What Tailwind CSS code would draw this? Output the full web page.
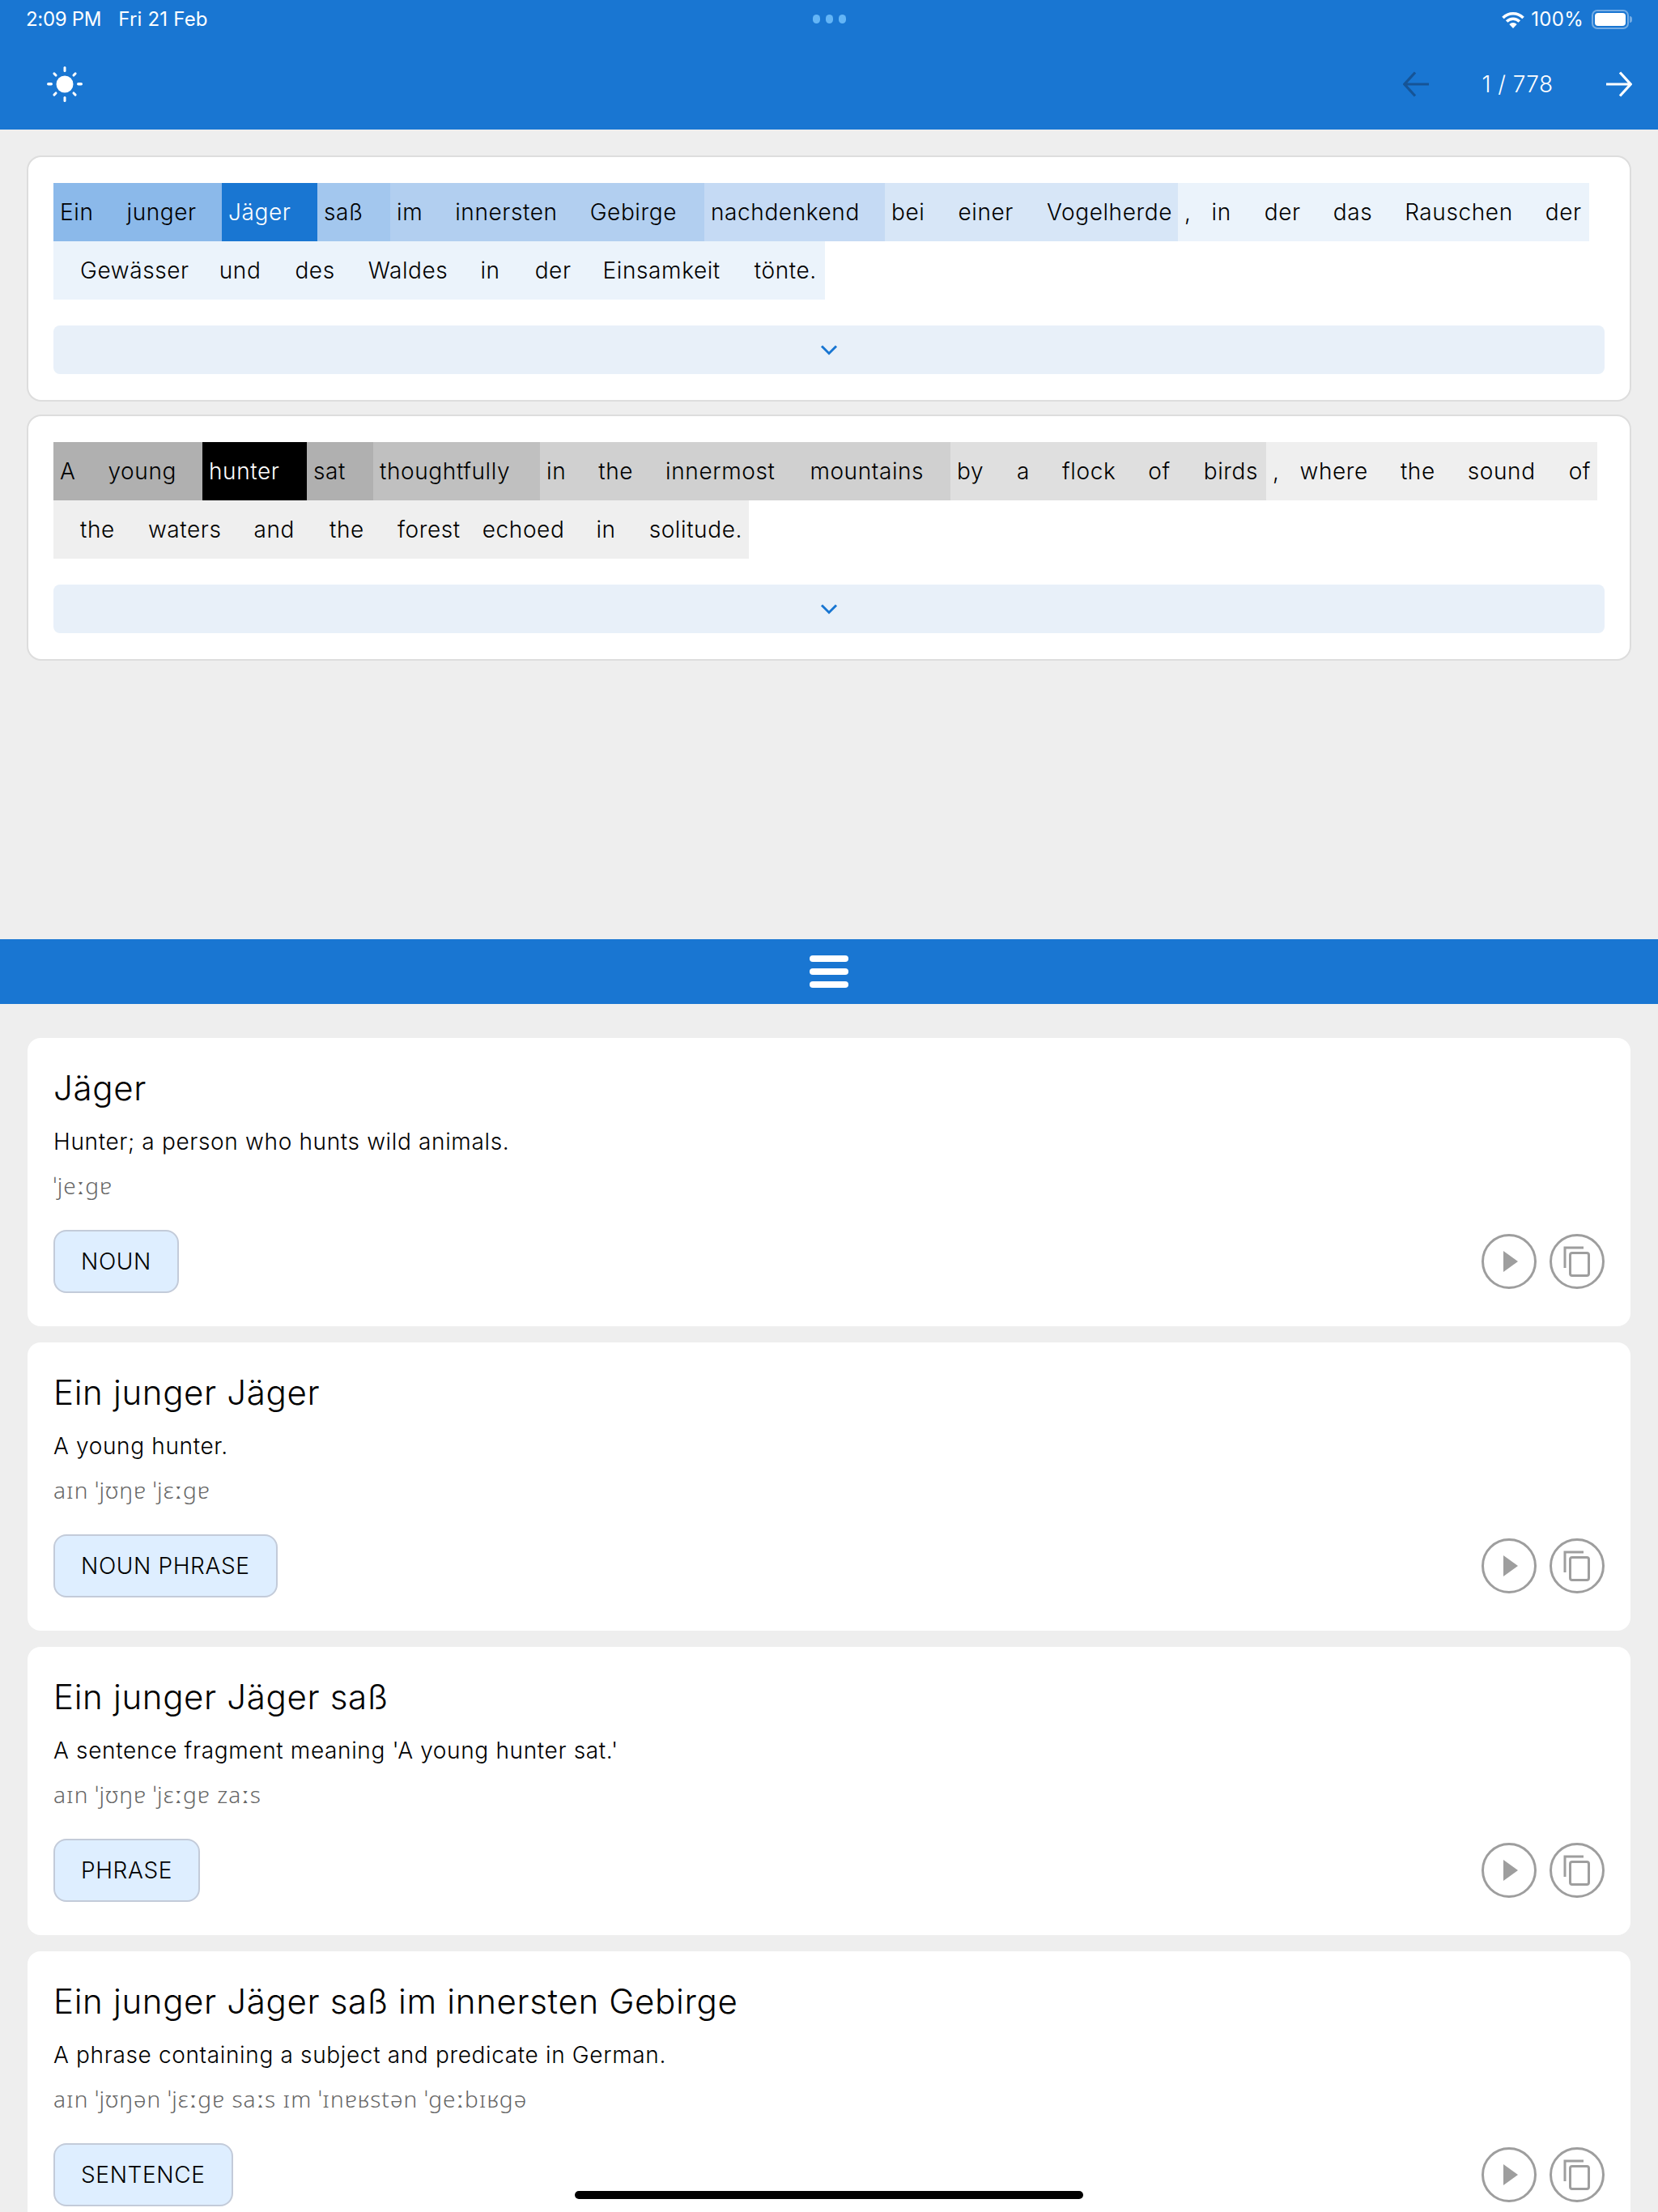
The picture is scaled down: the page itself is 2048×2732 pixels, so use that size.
<!DOCTYPE html>
<html lang="en">
<head>
    <meta charset="UTF-8">
    <meta name="viewport" content="width=device-width, initial-scale=1.0">
    <title>Reader</title>
    <script src="https://cdn.jsdelivr.net/npm/@tailwindcss/browser@4"></script>
</head>
<body class="bg-[#eeeeee] font-['Inter','Liberation_Sans',sans-serif] font-[350] text-black">
<div class="relative w-[2048px] h-[2732px] overflow-hidden">

    <!-- Status bar + toolbar -->
    <header class="bg-[#1976d2] h-[160px] text-white relative">
        <div class="h-[48px] px-[32px] flex items-center justify-between text-[24px] font-normal">
            <div class="flex gap-[21px]"><span class="tracking-[-0.3px]">2:09 PM</span><span class="tracking-[0.2px]">Fri 21 Feb</span></div>
            <div class="flex items-center gap-[7px]">
                <svg width="30" height="23" viewBox="0 0 28 22" fill="none" stroke="white" stroke-width="3.4"><path d="M2 8.500a17 17 0 0 1 24 0"/><path d="M6.500 13a10.500 10.500 0 0 1 15 0"/><path d="M14 21l-4.500-4.800a6.300 6.300 0 0 1 9 0z" fill="white" stroke="none"/></svg>
                <span class="tracking-[0.3px]">100%</span>
                <div class="flex items-center gap-[1px] ml-[3px]">
                    <div class="w-[46px] h-[24px] rounded-[7px] border-2 border-white/40 p-[2px]"><div class="w-full h-full bg-white rounded-[4px]"></div></div>
                    <div class="w-[3px] h-[8px] bg-white/40 rounded-r-full"></div>
                </div>
            </div>
        </div>
        <div class="absolute top-[18px] left-[1004px] flex gap-[7px]">
            <div class="w-[9px] h-[11px] rounded-full bg-[#64b5f6]"></div>
            <div class="w-[9px] h-[11px] rounded-full bg-[#64b5f6]"></div>
            <div class="w-[9px] h-[11px] rounded-full bg-[#64b5f6]"></div>
        </div>
        <div class="h-[112px] pl-[58px] pr-[32px] flex items-center justify-between">
            <svg width="44" height="44" viewBox="0 0 44 44" fill="white">
                <circle cx="22" cy="22" r="10.500"/>
                <rect x="20.500" y="0" width="3" height="7" rx="1.500"/><rect x="20.500" y="37" width="3" height="7" rx="1.500"/>
                <rect x="0" y="20" width="7" height="3.600" rx="1.800"/><rect x="37" y="20" width="7" height="3.600" rx="1.800"/>
                <rect x="20.500" y="2" width="3" height="6" rx="1.500" transform="rotate(45 22 22)"/><rect x="20.500" y="36" width="3" height="6" rx="1.500" transform="rotate(45 22 22)"/>
                <rect x="20.500" y="2" width="3" height="6" rx="1.500" transform="rotate(-45 22 22)"/><rect x="20.500" y="36" width="3" height="6" rx="1.500" transform="rotate(-45 22 22)"/>
            </svg>
            <div class="flex items-center">
                <svg width="32" height="32" viewBox="0 0 32 32" fill="none" stroke="#165496" stroke-width="3.200"><path d="M32 16H2M15 1.500L1.800 16 15 30.500"/></svg>
                <span class="w-[219px] text-center text-[28px] font-light tracking-[0.4px]">1 / 778</span>
                <svg width="32" height="32" viewBox="0 0 32 32" fill="none" stroke="white" stroke-width="3.200"><path d="M0 16h30M17 1.500L30.200 16 17 30.500"/></svg>
            </div>
        </div>
    </header>

    <!-- German passage -->
    <section class="mx-[33px] mt-[32px] h-[304px] bg-white rounded-[18px] border-2 border-[#dddddd] px-[31px] pt-[32px] text-[28px] tracking-[0.6px]">
        <div class="flex h-[72px] items-center">
            <div class="flex w-[208px] h-full items-center bg-[#8bb9ea]"><span class="pl-2 pr-[33px]">Ein</span><span class="pl-2">junger</span></div>
            <div class="flex w-[118px] h-full items-center bg-[#1976d2] text-white"><span class="pl-2">Jäger</span></div>
            <div class="flex w-[90px] h-full items-center bg-[#a3c7ee]"><span class="pl-2">saß</span></div>
            <div class="flex w-[388px] h-full items-center bg-[#b2cff0]"><span class="pl-2 pr-[32px]">im</span><span class="pl-2 pr-[32px]">innersten</span><span class="pl-2">Gebirge</span></div>
            <div class="flex w-[223px] h-full items-center bg-[#c5daf4]"><span class="pl-2">nachdenkend</span></div>
            <div class="flex w-[362px] h-full items-center bg-[#d7e6f7]"><span class="pl-2 pr-[33px]">bei</span><span class="pl-2 pr-[33px]">einer</span><span class="pl-2">Vogelherde</span></div>
            <div class="flex w-[508px] h-full items-center bg-[#ebf3fb]"><span class="pl-2 pr-[17px]">,</span><span class="pl-2 pr-[33px]">in</span><span class="pl-2 pr-[32px]">der</span><span class="pl-2 pr-[32px]">das</span><span class="pl-2 pr-[32px]">Rauschen</span><span class="pl-2">der</span></div>
        </div>
        <div class="flex h-[72px] items-center">
            <div class="flex w-[953px] h-full items-center bg-[#ebf3fb] pl-[25px]"><span class="pl-2 pr-[29px]">Gewässer</span><span class="pl-2 pr-[34px]">und</span><span class="pl-2 pr-[33px]">des</span><span class="pl-2 pr-[32px]">Waldes</span><span class="pl-2 pr-[35px]">in</span><span class="pl-2 pr-[31px]">der</span><span class="pl-2 pr-[34px]">Einsamkeit</span><span class="pl-2">tönte.</span></div>
        </div>
        <div class="mt-[32px] h-[60px] rounded-[8px] bg-[#e8f0f9] flex items-center justify-center">
            <svg width="22" height="14" viewBox="0 0 22 14" fill="none" stroke="#1976d2" stroke-width="3"><path d="M2 2.500l9 9 9-9"/></svg>
        </div>
    </section>

    <!-- English passage -->
    <section class="mx-[33px] mt-[16px] h-[304px] bg-white rounded-[18px] border-2 border-[#dddddd] px-[31px] pt-[32px] text-[28px] tracking-[0.6px]">
        <div class="flex h-[72px] items-center">
            <div class="flex w-[184px] h-full items-center bg-[#b0b0b0]"><span class="pl-2 pr-[32px]">A</span><span class="pl-2">young</span></div>
            <div class="flex w-[129px] h-full items-center bg-black text-white"><span class="pl-2">hunter</span></div>
            <div class="flex w-[82px] h-full items-center bg-[#b0b0b0]"><span class="pl-2">sat</span></div>
            <div class="flex w-[206px] h-full items-center bg-[#c0c0c0]"><span class="pl-2">thoughtfully</span></div>
            <div class="flex w-[507px] h-full items-center bg-[#d0d0d0]"><span class="pl-2 pr-[32px]">in</span><span class="pl-2 pr-[32px]">the</span><span class="pl-2 pr-[35px]">innermost</span><span class="pl-2">mountains</span></div>
            <div class="flex w-[390px] h-full items-center bg-[#dfdfdf]"><span class="pl-2 pr-[33px]">by</span><span class="pl-2 pr-[32px]">a</span><span class="pl-2 pr-[32px]">flock</span><span class="pl-2 pr-[33px]">of</span><span class="pl-2">birds</span></div>
            <div class="flex w-[409px] h-full items-center bg-[#efefef]"><span class="pl-2 pr-[17px]">,</span><span class="pl-2 pr-[32px]">where</span><span class="pl-2 pr-[32px]">the</span><span class="pl-2 pr-[33px]">sound</span><span class="pl-2">of</span></div>
        </div>
        <div class="flex h-[72px] items-center">
            <div class="flex w-[859px] h-full items-center bg-[#efefef] pl-[25px]"><span class="pl-2 pr-[33px]">the</span><span class="pl-2 pr-[32px]">waters</span><span class="pl-2 pr-[35px]">and</span><span class="pl-2 pr-[33px]">the</span><span class="pl-2 pr-[19px]">forest</span><span class="pl-2 pr-[31px]">echoed</span><span class="pl-2 pr-[33px]">in</span><span class="pl-2">solitude.</span></div>
        </div>
        <div class="mt-[32px] h-[60px] rounded-[8px] bg-[#e8f0f9] flex items-center justify-center">
            <svg width="22" height="14" viewBox="0 0 22 14" fill="none" stroke="#1976d2" stroke-width="3"><path d="M2 2.500l9 9 9-9"/></svg>
        </div>
    </section>

    <!-- Drag handle -->
    <div class="absolute top-[1160px] left-0 w-full h-[80px] bg-[#1976d2] flex flex-col items-center justify-center gap-[8px]">
        <div class="w-[48px] h-[8px] rounded-full bg-white"></div>
        <div class="w-[48px] h-[8px] rounded-full bg-white"></div>
        <div class="w-[48px] h-[8px] rounded-full bg-white"></div>
    </div>

    <!-- Dictionary cards -->
    <div class="absolute top-[1282px] left-[34px] w-[1980px] flex flex-col gap-[20px]">
        <article class="h-[356px] bg-white rounded-[16px] px-[32px] pt-[37px] flex flex-col shrink-0">
            <h3 class="text-[42px] leading-[50px] font-[350] tracking-[0.65px]">Jäger</h3>
            <p class="mt-[23px] text-[28px] leading-[36px] tracking-[0.65px]">Hunter; a person who hunts wild animals.</p>
            <p class="mt-[19px] text-[28px] leading-[34px] tracking-[1.05px] text-[#666666] font-['Noto_Sans','DejaVu_Sans',sans-serif]">ˈjeːɡɐ</p>
            <div class="mt-[38px] flex items-center justify-between">
                <span class="h-[78px] px-[32px] flex items-center rounded-[16px] border-2 border-[#c3cbd9] bg-[#deeeff] text-[28px] tracking-[0.65px]">NOUN</span>
                <div class="flex gap-[16px]">
                    <div class="w-[68px] h-[68px] rounded-full border-[3px] border-[#9e9e9e] flex items-center justify-center"><svg width="22" height="26" viewBox="0 0 22 26" fill="#9e9e9e" class="ml-[3px]"><path d="M2 0v26l18-13z"/></svg></div>
                    <div class="w-[68px] h-[68px] rounded-full border-[3px] border-[#9e9e9e] flex items-center justify-center"><svg width="34" height="38" viewBox="0 0 34 38" fill="none" stroke="#9e9e9e" stroke-width="3"><path d="M2 27V2h23"/><rect x="8.500" y="8.500" width="23" height="28" rx="2.500"/></svg></div>
                </div>
            </div>
        </article>
        <article class="h-[356px] bg-white rounded-[16px] px-[32px] pt-[37px] flex flex-col shrink-0">
            <h3 class="text-[42px] leading-[50px] font-[350] tracking-[0.65px]">Ein junger Jäger</h3>
            <p class="mt-[23px] text-[28px] leading-[36px] tracking-[0.65px]">A young hunter.</p>
            <p class="mt-[19px] text-[28px] leading-[34px] tracking-[1.05px] text-[#666666] font-['Noto_Sans','DejaVu_Sans',sans-serif]">aɪn ˈjʊŋɐ ˈjɛːɡɐ</p>
            <div class="mt-[38px] flex items-center justify-between">
                <span class="h-[78px] px-[32px] flex items-center rounded-[16px] border-2 border-[#c3cbd9] bg-[#deeeff] text-[28px] tracking-[0.65px]">NOUN PHRASE</span>
                <div class="flex gap-[16px]">
                    <div class="w-[68px] h-[68px] rounded-full border-[3px] border-[#9e9e9e] flex items-center justify-center"><svg width="22" height="26" viewBox="0 0 22 26" fill="#9e9e9e" class="ml-[3px]"><path d="M2 0v26l18-13z"/></svg></div>
                    <div class="w-[68px] h-[68px] rounded-full border-[3px] border-[#9e9e9e] flex items-center justify-center"><svg width="34" height="38" viewBox="0 0 34 38" fill="none" stroke="#9e9e9e" stroke-width="3"><path d="M2 27V2h23"/><rect x="8.500" y="8.500" width="23" height="28" rx="2.500"/></svg></div>
                </div>
            </div>
        </article>
        <article class="h-[356px] bg-white rounded-[16px] px-[32px] pt-[37px] flex flex-col shrink-0">
            <h3 class="text-[42px] leading-[50px] font-[350] tracking-[0.65px]">Ein junger Jäger saß</h3>
            <p class="mt-[23px] text-[28px] leading-[36px] tracking-[0.65px]">A sentence fragment meaning 'A young hunter sat.'</p>
            <p class="mt-[19px] text-[28px] leading-[34px] tracking-[1.05px] text-[#666666] font-['Noto_Sans','DejaVu_Sans',sans-serif]">aɪn ˈjʊŋɐ ˈjɛːɡɐ zaːs</p>
            <div class="mt-[38px] flex items-center justify-between">
                <span class="h-[78px] px-[32px] flex items-center rounded-[16px] border-2 border-[#c3cbd9] bg-[#deeeff] text-[28px] tracking-[0.65px]">PHRASE</span>
                <div class="flex gap-[16px]">
                    <div class="w-[68px] h-[68px] rounded-full border-[3px] border-[#9e9e9e] flex items-center justify-center"><svg width="22" height="26" viewBox="0 0 22 26" fill="#9e9e9e" class="ml-[3px]"><path d="M2 0v26l18-13z"/></svg></div>
                    <div class="w-[68px] h-[68px] rounded-full border-[3px] border-[#9e9e9e] flex items-center justify-center"><svg width="34" height="38" viewBox="0 0 34 38" fill="none" stroke="#9e9e9e" stroke-width="3"><path d="M2 27V2h23"/><rect x="8.500" y="8.500" width="23" height="28" rx="2.500"/></svg></div>
                </div>
            </div>
        </article>
        <article class="h-[356px] bg-white rounded-[16px] px-[32px] pt-[37px] flex flex-col shrink-0">
            <h3 class="text-[42px] leading-[50px] font-[350] tracking-[0.65px]">Ein junger Jäger saß im innersten Gebirge</h3>
            <p class="mt-[23px] text-[28px] leading-[36px] tracking-[0.65px]">A phrase containing a subject and predicate in German.</p>
            <p class="mt-[19px] text-[28px] leading-[34px] tracking-[1.05px] text-[#666666] font-['Noto_Sans','DejaVu_Sans',sans-serif]">aɪn ˈjʊŋən ˈjɛːɡɐ saːs ɪm ˈɪnɐʁstən ˈɡeːbɪʁɡə</p>
            <div class="mt-[38px] flex items-center justify-between">
                <span class="h-[78px] px-[32px] flex items-center rounded-[16px] border-2 border-[#c3cbd9] bg-[#deeeff] text-[28px] tracking-[0.65px]">SENTENCE</span>
                <div class="flex gap-[16px]">
                    <div class="w-[68px] h-[68px] rounded-full border-[3px] border-[#9e9e9e] flex items-center justify-center"><svg width="22" height="26" viewBox="0 0 22 26" fill="#9e9e9e" class="ml-[3px]"><path d="M2 0v26l18-13z"/></svg></div>
                    <div class="w-[68px] h-[68px] rounded-full border-[3px] border-[#9e9e9e] flex items-center justify-center"><svg width="34" height="38" viewBox="0 0 34 38" fill="none" stroke="#9e9e9e" stroke-width="3"><path d="M2 27V2h23"/><rect x="8.500" y="8.500" width="23" height="28" rx="2.500"/></svg></div>
                </div>
            </div>
        </article>
    </div>

    <!-- Home indicator -->
    <div class="absolute left-[710px] bottom-[16px] w-[628px] h-[10px] rounded-full bg-black"></div>
</div>
</body>
</html>
